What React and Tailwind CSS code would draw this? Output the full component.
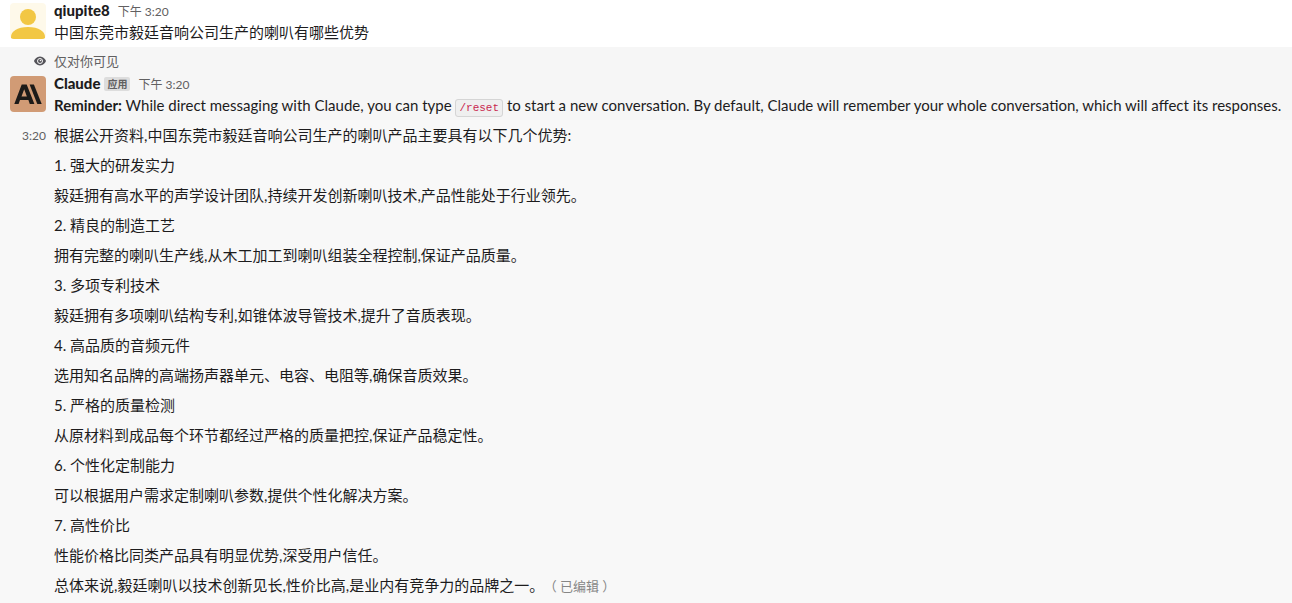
import React from "react";

const REPLY = [
  "根据公开资料,中国东莞市毅廷音响公司生产的喇叭产品主要具有以下几个优势:",
  "1. 强大的研发实力",
  "毅廷拥有高水平的声学设计团队,持续开发创新喇叭技术,产品性能处于行业领先。",
  "2. 精良的制造工艺",
  "拥有完整的喇叭生产线,从木工加工到喇叭组装全程控制,保证产品质量。",
  "3. 多项专利技术",
  "毅廷拥有多项喇叭结构专利,如锥体波导管技术,提升了音质表现。",
  "4. 高品质的音频元件",
  "选用知名品牌的高端扬声器单元、电容、电阻等,确保音质效果。",
  "5. 严格的质量检测",
  "从原材料到成品每个环节都经过严格的质量把控,保证产品稳定性。",
  "6. 个性化定制能力",
  "可以根据用户需求定制喇叭参数,提供个性化解决方案。",
  "7. 高性价比",
  "性能价格比同类产品具有明显优势,深受用户信任。",
  "总体来说,毅廷喇叭以技术创新见长,性价比高,是业内有竞争力的品牌之一。",
];

function UserAvatar() {
  return (
    <svg viewBox="0 0 36 36" className="size-9 rounded" aria-hidden="true">
      <rect width="36" height="36" fill="#fef9ea" />
      <circle cx="18" cy="14" r="8" fill="#f2c744" />
      <path d="M1 36v-2c0-5.500 6-10 17-10s17 4.500 17 10v2z" fill="#f2c744" />
    </svg>
  );
}

function ClaudeAvatar() {
  return (
    <svg viewBox="0 0 36 36" className="size-9 rounded" aria-hidden="true">
      <rect width="36" height="36" fill="#d19b75" />
      <path
        fillRule="evenodd"
        d="M11.700 8.500h5L24.400 28h-4.600l-1.400-4H10l-1.400 4H4.300zM14.200 13.200l-2.700 7.300h5.400z"
        fill="#1c1a18"
      />
      <path d="M19.600 8.500h4.300L31.700 28h-4.400z" fill="#1c1a18" />
    </svg>
  );
}

function EyeIcon() {
  return (
    <svg viewBox="0 0 12 10" className="h-[10px] w-3" aria-hidden="true">
      <path
        d="M6 .5C2.800.5.900 2.900.200 4.500a1 1 0 0 0 0 1C.900 7.100 2.800 9.500 6 9.500s5.100-2.400 5.800-4a1 1 0 0 0 0-1C11.100 2.900 9.200.5 6 .5z"
        fill="#55545a"
      />
      <circle cx="6" cy="5" r="2.500" fill="none" stroke="#f6f6f6" strokeWidth="1" />
      <circle cx="6.500" cy="4.500" r=".8" fill="#f6f6f6" />
    </svg>
  );
}

function Time({ children }) {
  return <time className="text-xs leading-5 text-[#616061]">{children}</time>;
}

export default function App() {
  return (
    <main className="bg-white font-['Lato','Noto_Sans_CJK_SC',sans-serif] text-[15px] leading-[22px] text-[#1d1c1d]">
      <article className="flex gap-2 px-2.5 pb-1">
        <div className="shrink-0 pt-[3px]">
          <UserAvatar />
        </div>
        <div className="min-w-0">
          <header className="flex h-[21px] items-baseline gap-2 leading-5">
            <b className="font-black">qiupite8</b>
            <Time>下午 3:20</Time>
          </header>
          <p>中国东莞市毅廷音响公司生产的喇叭有哪些优势</p>
        </div>
      </article>

      <article className="bg-[#f6f6f6] px-2 pt-[3px] pb-1">
        <div className="flex items-center gap-2 pb-px pl-0.5 text-[13px] text-[#616061]">
          <div className="flex w-9 shrink-0 justify-end">
            <EyeIcon />
          </div>
          <span>仅对你可见</span>
        </div>
        <div className="flex gap-2 pl-0.5">
          <div className="h-10 shrink-0 pt-[3px]">
            <ClaudeAvatar />
          </div>
          <div className="min-w-0">
            <header className="flex h-[21px] items-baseline leading-5">
              <b className="font-black">Claude</b>
              <span className="ml-1 mr-2 self-center rounded-xs bg-[#dddddd] px-[3px] text-[10px] leading-[14px] font-bold text-[#616061]">
                应用
              </span>
              <Time>下午 3:20</Time>
            </header>
            <p>
              <b className="font-bold">Reminder:</b> While direct messaging with Claude, you can type{" "}
              <code className="rounded-[3px] border border-[#d5d5d5] bg-[#efefef] px-[3px] py-[2px] font-['Liberation_Mono',monospace] text-[11px] leading-none text-[#c9274f]">
                /reset
              </code>{" "}
              to start a new conversation. By default, Claude will remember your whole conversation, which will affect
              its responses.
            </p>
          </div>
        </div>
      </article>

      <article className="flex gap-2 bg-[#f8f8f8] px-2.5 pb-[3px] leading-[30px]">
        <time className="w-9 shrink-0 text-right text-xs leading-[32px] text-[#616061]">3:20</time>
        <div className="min-w-0">
          {REPLY.map((line, i) => (
            <p key={line}>
              {line}
              {i === REPLY.length - 1 && (
                <span className="ml-1.5 text-[13px] leading-none text-[#868686]">（ 已编辑 ）</span>
              )}
            </p>
          ))}
        </div>
      </article>
    </main>
  );
}
